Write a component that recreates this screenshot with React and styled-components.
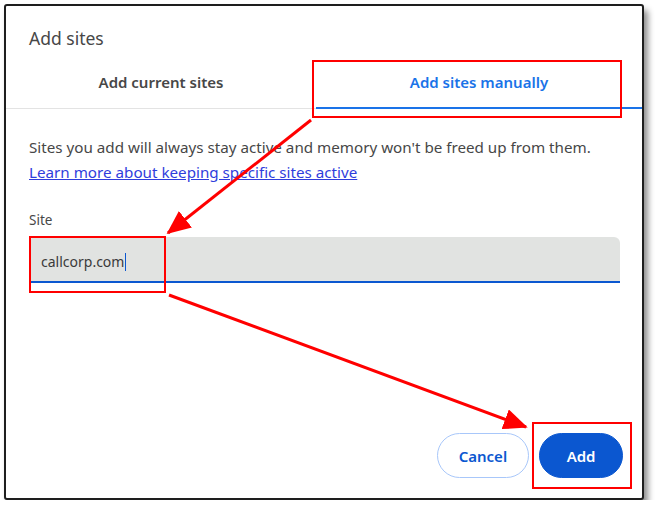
import React from 'react'
import styled, { createGlobalStyle } from 'styled-components'

const GlobalStyle = createGlobalStyle`
    body {
        margin:0;
        background:#ffffff;
        font-family:"Noto Sans", "Open Sans", sans-serif;
    }
`

function Annotations() {
    return (
        <Overlay width="657" height="516" viewBox="0 0 657 516">
            <defs>
                <marker id="head" markerWidth="8" markerHeight="7" refX="7.4" refY="3.5" orient="auto" markerUnits="strokeWidth">
                    <polygon points="0 0, 8 3.5, 0 7" fill="#ff0000" />
                </marker>
            </defs>
            <rect x="313" y="61" width="308" height="56" />
            <rect x="30" y="237" width="135" height="55" />
            <rect x="533" y="423" width="98" height="65" />
            <line x1="311" y1="120" x2="168" y2="233" markerEnd="url(#head)" />
            <line x1="169" y1="295" x2="526" y2="427" markerEnd="url(#head)" />
        </Overlay>
    )
}

function App() {
    return (
        <>
            <GlobalStyle />
            <Frame>
                <Title>Add sites</Title>
                <Tabs>
                    <Tab width="310px">Add current sites</Tab>
                    <Tab active>Add sites manually</Tab>
                </Tabs>
                <Body>
                    <Description>Sites you add will always stay active and memory won't be freed up from them.</Description>
                    <LearnLink href="#">Learn more about keeping specific sites active</LearnLink>
                    <FieldLabel>Site</FieldLabel>
                    <SiteInput>
                        callcorp.com<Caret />
                    </SiteInput>
                </Body>
                <Footer>
                    <Button>Cancel</Button>
                    <Button primary>Add</Button>
                </Footer>
            </Frame>
            <Annotations />
        </>
    )
}

export default App

const Frame = styled.div`
    box-sizing:border-box;
    width:640px;
    height:496px;
    margin:4px 0 0 4px;
    border:2px solid #1e1e1e;
    border-radius:3px;
    background:#ffffff;
    box-shadow:4px 6px 6px rgba(0, 0, 0, .45);
    display:flex;
    flex-direction:column;
`
const Title = styled.div`
    padding:21px 23px 0 23px;
    font-size:17.5px;
    line-height:22px;
    color:#474747;
`
const Tabs = styled.div`
    display:flex;
    margin-top:12px;
    height:47px;
    border-bottom:1px solid #e3e3e3;
`
const Tab = styled.div`
    flex:${props => props.width ? `0 0 ${props.width}` : '1'};
    display:flex;
    align-items:center;
    justify-content:center;
    box-sizing:border-box;
    padding-bottom:4px;
    font-size:15px;
    font-weight:600;
    color:${props => props.active ? '#1a73e8' : '#474747'};
    border-bottom:2px solid ${props => props.active ? '#1a73e8' : 'transparent'};
    margin-bottom:-1px;
`
const Body = styled.div`
    display:flex;
    flex-direction:column;
    padding:26px 22px 0 23px;
`
const Description = styled.div`
    font-size:15.2px;
    line-height:25px;
    color:#474747;
`
const LearnLink = styled.a`
    font-size:15.2px;
    line-height:25px;
    color:#2f3ddc;
    text-decoration:underline;
    align-self:flex-start;
`
const FieldLabel = styled.div`
    margin-top:26px;
    font-size:13.5px;
    line-height:18px;
    color:#474747;
`
const SiteInput = styled.div`
    margin-top:8px;
    box-sizing:border-box;
    height:46px;
    padding:5px 12px 0 12px;
    display:flex;
    align-items:center;
    background:#e1e3e1;
    border-radius:6px 6px 0 0;
    border-bottom:2px solid #0b57d0;
    font-size:14px;
    color:#3a3a3a;
`
const Caret = styled.span`
    display:inline-block;
    width:1px;
    height:18px;
    margin-left:1px;
    background:#0b57d0;
`
const Footer = styled.div`
    margin-top:auto;
    display:flex;
    justify-content:flex-end;
    gap:10px;
    padding:0 19px 20px 0;
`
const Button = styled.div`
    box-sizing:border-box;
    height:45px;
    padding:0 ${props => props.primary ? '26.5px' : '21px'};
    display:flex;
    align-items:center;
    border-radius:23px;
    font-size:15px;
    font-weight:600;
    color:${props => props.primary ? '#ffffff' : '#0b57d0'};
    background:${props => props.primary ? '#0b57d0' : '#ffffff'};
    border:1px solid ${props => props.primary ? '#0b57d0' : '#a8c7fa'};
`
const Overlay = styled.svg`
    position:absolute;
    left:0;
    top:0;
    pointer-events:none;
    rect {
        fill:none;
        stroke:#ff0000;
        stroke-width:2;
    }
    line {
        stroke:#ff0000;
        stroke-width:3;
    }
`
